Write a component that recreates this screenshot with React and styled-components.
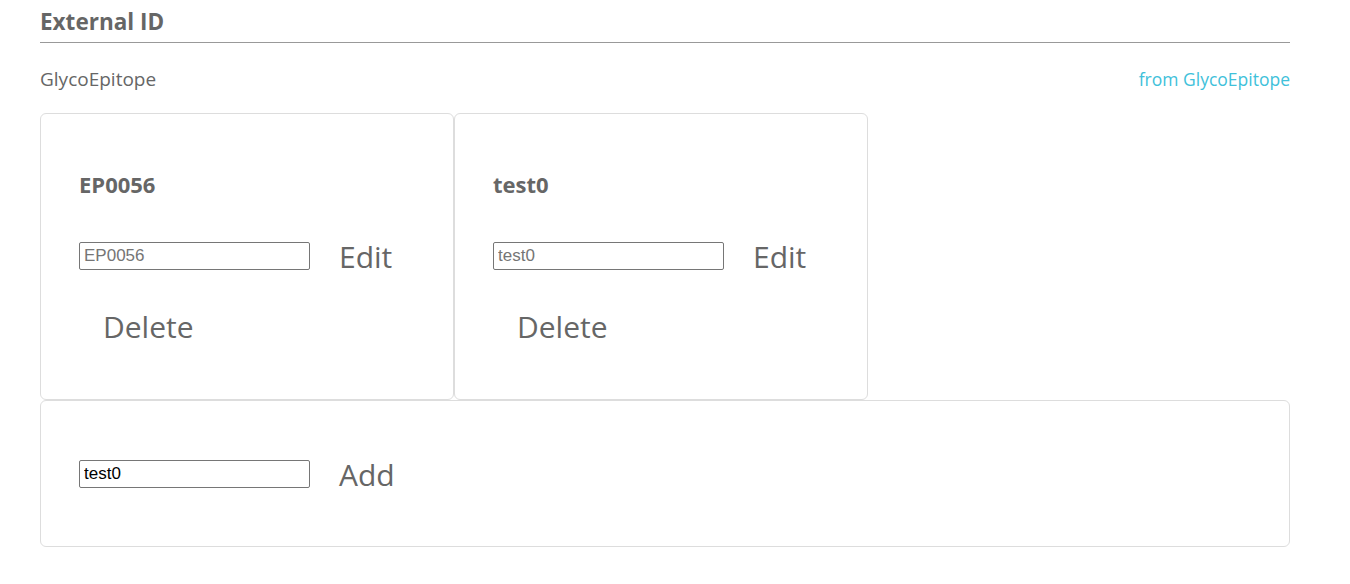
import React from 'react';
import styled, { createGlobalStyle } from 'styled-components';

const GlobalStyle = createGlobalStyle`
  body {
    margin: 0;
    background: #fff;
    font-family: 'Open Sans', 'Noto Sans', sans-serif;
    color: #666;
  }
`;

// Outer section
const Section = styled.section`
  width: 1250px;
  margin-left: 40px;
`;

// Section heading with rule under it
const Heading = styled.h2`
  margin: 7px 0 0;
  padding-bottom: 5px;
  font-size: 22.5px;
  line-height: 30px;
  font-weight: 700;
  color: #666;
  border-bottom: 1px solid #999;
`;

const SourceRow = styled.div`
  display: flex;
  justify-content: space-between;
  align-items: baseline;
  margin-top: 24px;
  font-size: 19px;
  line-height: 24px;
`;

const SourceLink = styled.a`
  color: #3fc1da;
  font-size: 17.5px;
  text-decoration: none;
`;

const CardRow = styled.div`
  display: flex;
  margin-top: 22px;
`;

const Card = styled.div`
  box-sizing: border-box;
  width: ${(p) => (p.$wide ? '1250px' : '414px')};
  border: 1px solid #ddd;
  border-radius: 6px;
  padding: ${(p) => (p.$wide ? '53px 38px 52px' : '56px 38px 51px')};
  display: flex;
  flex-direction: column;
`;

const CardTitle = styled.h4`
  margin: 0 0 38px;
  font-size: 22px;
  line-height: 28px;
  font-weight: 700;
  color: #666;
`;

const FieldRow = styled.div`
  display: flex;
  align-items: center;
  height: 40px;
`;

const TextInput = styled.input`
  box-sizing: border-box;
  width: 231px;
  height: 28px;
  margin: 0 5px 0 0;
  padding: 1px 4px;
  border: 1px solid #767676;
  border-radius: 2px;
  font-family: 'Liberation Sans', Arial, sans-serif;
  font-size: 17px;
  color: #000;

  &::placeholder {
    color: #757575;
  }
`;

const TextButton = styled.button`
  background: none;
  border: none;
  padding: 0 24px;
  font-family: 'Open Sans', 'Noto Sans', sans-serif;
  font-size: 30px;
  line-height: 42px;
  color: #666;
  cursor: pointer;
  align-self: flex-start;
  margin-top: ${(p) => (p.$below ? '30px' : '0')};
`;

const ids = ['EP0056', 'test0'];

export default function App() {
  return (
    <>
      <GlobalStyle />
      <Section>
        <Heading>External ID</Heading>
        <SourceRow>
          <span>GlycoEpitope</span>
          <SourceLink href="#">from GlycoEpitope</SourceLink>
        </SourceRow>
        <CardRow>
          {ids.map((id) => (
            <Card key={id}>
              <CardTitle>{id}</CardTitle>
              <FieldRow>
                <TextInput placeholder={id} />
                <TextButton>Edit</TextButton>
              </FieldRow>
              <TextButton $below>Delete</TextButton>
            </Card>
          ))}
        </CardRow>
        <Card $wide>
          <FieldRow>
            <TextInput defaultValue="test0" />
            <TextButton>Add</TextButton>
          </FieldRow>
        </Card>
      </Section>
    </>
  );
}
